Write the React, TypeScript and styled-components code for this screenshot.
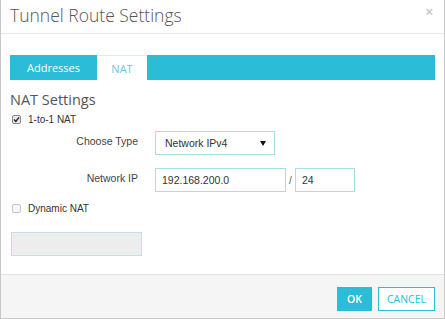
import React from 'react';
import styled, { createGlobalStyle } from 'styled-components';

const TEAL = '#2bbcd8';
const FIELD_BORDER = '#a9dde8';

const GlobalStyle = createGlobalStyle`
  html, body {
    margin: 0;
    padding: 0;
    background: #ffffff;
  }
  body {
    font-family: "Liberation Sans", Arial, sans-serif;
  }
`;

const Modal = styled.div`
  box-sizing: border-box;
  width: 445px;
  height: 319px;
  display: flex;
  flex-direction: column;
  background: #fff;
  border: 1px solid #c8c8c8;
  border-top: none;
`;

const Header = styled.div`
  height: 34px;
  box-sizing: border-box;
  display: flex;
  align-items: flex-start;
  justify-content: space-between;
  padding: 5px 11px 0 9px;
  border-bottom: 1px solid #e8e8e8;
`;

const Title = styled.h1`
  margin: 0;
  font-family: "Open Sans", "Lato", sans-serif;
  font-weight: 300;
  font-size: 17.5px;
  line-height: 21px;
  color: #555;
`;

const Close = styled.button`
  border: none;
  background: none;
  padding: 0;
  margin-top: 1px;
  font-family: "Liberation Sans", Arial, sans-serif;
  font-size: 13px;
  font-weight: bold;
  line-height: 12px;
  color: #c9c9c9;
  cursor: pointer;
`;

const Body = styled.div`
  flex: 1;
  padding: 21px 9px 0 9px;
`;

const TabBar = styled.div`
  display: flex;
  height: 25px;
  background: ${TEAL};
`;

const Tab = styled.div<{ $active?: boolean }>`
  box-sizing: border-box;
  width: ${(p) => (p.$active ? '50px' : '87px')};
  display: flex;
  align-items: center;
  justify-content: center;
  font-family: "Open Sans", "Lato", sans-serif;
  font-size: 11px;
  color: ${(p) => (p.$active ? '#6cc8da' : '#fff')};
  background: ${(p) => (p.$active ? '#fff' : 'transparent')};
  border-top: ${(p) => (p.$active ? '1px solid #d8eef3' : 'none')};
`;

const SectionTitle = styled.h2`
  margin: 11px 0 0 0;
  font-family: "Open Sans", "Lato", sans-serif;
  font-weight: 400;
  font-size: 14.5px;
  line-height: 17px;
  color: #555;
`;

const CheckRow = styled.label<{ $top: number }>`
  display: flex;
  align-items: center;
  gap: 7px;
  margin-top: ${(p) => p.$top}px;
  margin-left: 2px;
  font-size: 10px;
  color: #333;
  height: 12px;
`;

const Box = styled.span<{ $checked?: boolean }>`
  box-sizing: border-box;
  width: 9px;
  height: 9px;
  border: 1px solid ${(p) => (p.$checked ? '#8a8a8a' : '#c4c4c4')};
  border-radius: 2px;
  background: ${(p) => (p.$checked ? '#e9e9e9' : '#f7f7f7')};
  display: flex;
  align-items: center;
  justify-content: center;
`;

const FieldRow = styled.div<{ $top: number }>`
  display: grid;
  grid-template-columns: 128px auto;
  align-items: center;
  column-gap: 17px;
  margin-top: ${(p) => p.$top}px;
`;

const Label = styled.span`
  text-align: right;
  font-size: 10.5px;
  color: #444;
  padding-bottom: 4px;
`;

const Inline = styled.div`
  display: flex;
  align-items: center;
`;

const Field = styled.div<{ $w: number; $pad: number }>`
  box-sizing: border-box;
  width: ${(p) => p.$w}px;
  height: 24px;
  border: 1px solid ${FIELD_BORDER};
  display: flex;
  align-items: center;
  justify-content: space-between;
  padding: 0 8px 0 ${(p) => p.$pad}px;
  font-size: 10.5px;
  color: #333;
  background: #fff;
`;

const Slash = styled.span`
  width: 9px;
  text-align: center;
  font-size: 10px;
  color: #555;
`;

const Triangle = styled.span`
  width: 0;
  height: 0;
  border-left: 3px solid transparent;
  border-right: 3px solid transparent;
  border-top: 5px solid #111;
`;

const Placeholder = styled.div`
  box-sizing: border-box;
  width: 131px;
  height: 24px;
  margin: 18px 0 0 1px;
  background: #ededed;
  border: 1px solid #bfe1e8;
`;

const Footer = styled.div`
  height: 44px;
  box-sizing: border-box;
  background: #f5f5f5;
  border-top: 1px solid #e3e3e3;
  display: flex;
  justify-content: flex-end;
  align-items: flex-start;
  gap: 6px;
  padding: 12px 9px 0 0;
`;

const Button = styled.button<{ $primary?: boolean }>`
  box-sizing: border-box;
  height: 24px;
  padding: 0;
  width: ${(p) => (p.$primary ? '35px' : '57px')};
  font-family: "Open Sans", "Lato", sans-serif;
  font-size: 10.5px;
  font-weight: ${(p) => (p.$primary ? 600 : 400)};
  color: ${(p) => (p.$primary ? '#fff' : TEAL)};
  background: ${(p) => (p.$primary ? TEAL : '#fff')};
  border: 1px solid ${TEAL};
  cursor: pointer;
`;

const Check = () => (
  <svg width="7" height="7" viewBox="0 0 7 7">
    <path d="M1 3.6 L2.8 5.4 L6 1.4" fill="none" stroke="#222" strokeWidth="1.4" />
  </svg>
);

export default function App() {
  return (
    <>
      <GlobalStyle />
      <Modal>
        <Header>
          <Title>Tunnel Route Settings</Title>
          <Close>×</Close>
        </Header>
        <Body>
          <TabBar>
            <Tab>Addresses</Tab>
            <Tab $active>NAT</Tab>
          </TabBar>
          <SectionTitle>NAT Settings</SectionTitle>
          <CheckRow $top={5}>
            <Box $checked>
              <Check />
            </Box>
            1-to-1 NAT
          </CheckRow>
          <FieldRow $top={6}>
            <Label>Choose Type</Label>
            <Field $w={120} $pad={9}>
              Network IPv4
              <Triangle />
            </Field>
          </FieldRow>
          <FieldRow $top={13}>
            <Label>Network IP</Label>
            <Inline>
              <Field $w={131} $pad={6}>192.168.200.0</Field>
              <Slash>/</Slash>
              <Field $w={60} $pad={6}>24</Field>
            </Inline>
          </FieldRow>
          <CheckRow $top={10}>
            <Box />
            Dynamic NAT
          </CheckRow>
          <Placeholder />
        </Body>
        <Footer>
          <Button $primary>OK</Button>
          <Button>CANCEL</Button>
        </Footer>
      </Modal>
    </>
  );
}
